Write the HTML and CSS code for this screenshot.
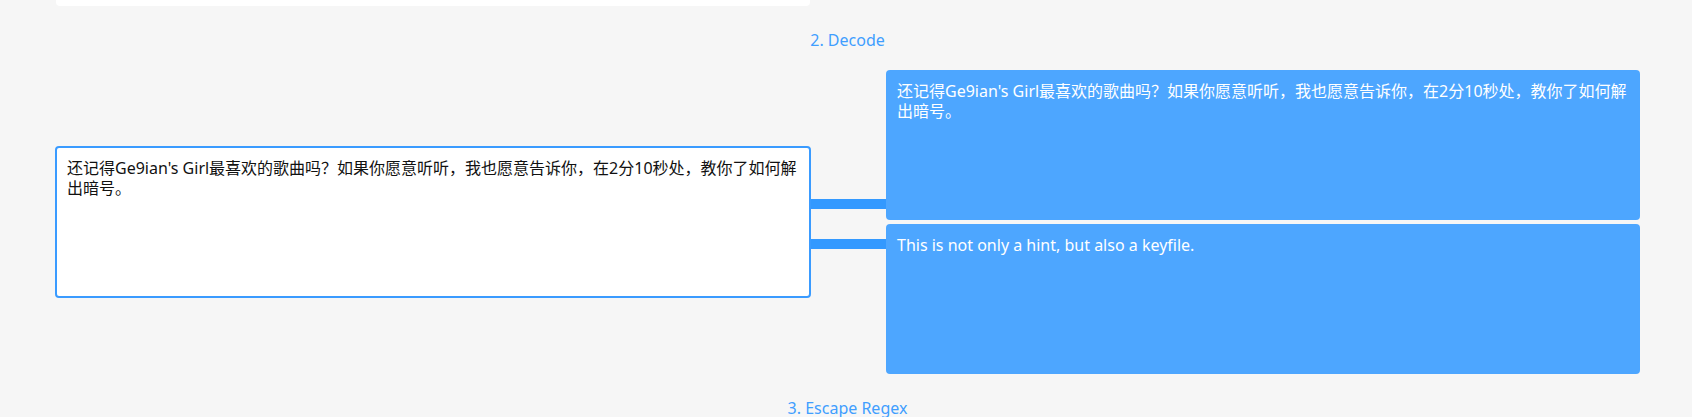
FILE: index.html
```html
<!DOCTYPE html>
<html lang="zh-CN">
<head>
<meta charset="utf-8">
<title>Decode</title>
<link rel="stylesheet" href="styles.css">
</head>
<body>
<div class="page">
  <div class="prev-card"></div>
  <h2 class="step-title">2. Decode</h2>
  <div class="decode-row">
    <div class="input-box">
      <div class="line">还记得Ge9ian's Girl最喜欢的歌曲吗？如果你愿意听听，我也愿意告诉你，在2分10秒处，教你了如何解</div>
      <div class="line">出暗号。</div>
    </div>
    <div class="connectors">
      <div class="bar"></div>
      <div class="bar"></div>
    </div>
    <div class="outputs">
      <div class="output-box">
        <div class="line">还记得Ge9ian's Girl最喜欢的歌曲吗？如果你愿意听听，我也愿意告诉你，在2分10秒处，教你了如何解</div>
        <div class="line">出暗号。</div>
      </div>
      <div class="output-box">
        <div class="line">This is not only a hint, but also a keyfile.</div>
      </div>
    </div>
  </div>
  <h2 class="step-title step-title-next">3. Escape Regex</h2>
</div>
</body>
</html>
```

FILE: styles.css
```css
html, body {
  margin: 0;
  padding: 0;
  background: #f6f6f6;
  height: 417px;
  overflow: hidden;
}

.page {
  width: 1585px;
  margin-left: 55px;
  font-family: "Noto Sans", "Noto Sans CJK SC", sans-serif;
  font-size: 16px;
}

.prev-card {
  width: 754px;
  margin-left: 1px;
  height: 6px;
  background: #ffffff;
  border-radius: 0 0 4px 4px;
}

.step-title {
  margin: 23px 0 0 0;
  font-size: 16px;
  font-weight: normal;
  line-height: 22px;
  color: #409eff;
  text-align: center;
}

.step-title-next {
  margin-top: 23px;
}

.decode-row {
  margin-top: 19px;
  display: flex;
  align-items: center;
}

.input-box {
  box-sizing: border-box;
  width: 756px;
  height: 152px;
  background: #ffffff;
  border: 2px solid #3a9bff;
  border-radius: 4px;
  padding: 10px 10px;
  color: #111111;
  line-height: 20px;
}

.line {
  white-space: nowrap;
}

.connectors {
  width: 75px;
  display: flex;
  flex-direction: column;
  gap: 30px;
  padding-top: 4px;
}

.bar {
  height: 10px;
  background: #3399ff;
}

.outputs {
  width: 754px;
  display: flex;
  flex-direction: column;
  gap: 4px;
}

.output-box {
  box-sizing: border-box;
  height: 150px;
  background: #4da6ff;
  border-radius: 4px;
  padding: 11px 11px;
  color: #ffffff;
  line-height: 20px;
}
```
